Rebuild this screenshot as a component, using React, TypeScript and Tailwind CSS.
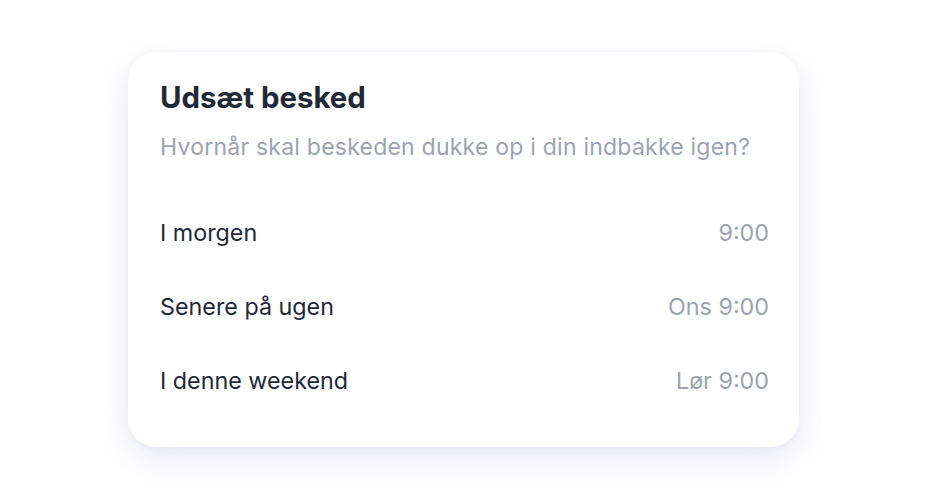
import React from 'react';

const options = [
  { label: 'I morgen', time: '9:00' },
  { label: 'Senere på ugen', time: 'Ons 9:00' },
  { label: 'I denne weekend', time: 'Lør 9:00' },
];

const App: React.FC = () => {
  return (
    <div
      className="min-h-screen bg-white pt-[52px]"
      style={{ fontFamily: 'Inter, "Noto Sans", sans-serif' }}
    >
      <div className="ml-[128px] w-[671px] rounded-[28px] bg-white pl-[32px] pr-[30px] pt-[28px] pb-[29px] shadow-[0_2px_6px_rgba(76,70,180,0.06),0_12px_32px_rgba(76,70,180,0.12)]">
        <h2 className="text-[29.4px] font-bold leading-[36px] text-[#1f2937]">Udsæt besked</h2>
        <p className="mt-[17px] text-[23px] leading-[28px] tracking-[0.23px] text-[#9ca3af]">
          Hvornår skal beskeden dukke op i din indbakke igen?
        </p>
        <div className="mt-[35px]">
          {options.map((o) => (
            <div key={o.label} className="flex h-[74px] items-center justify-between">
              <span className="text-[23.3px] leading-[32px] text-[#1f2937]">{o.label}</span>
              <span className="text-[23.3px] leading-[32px] text-[#9ca3af]">{o.time}</span>
            </div>
          ))}
        </div>
      </div>
    </div>
  );
};

export default App;
